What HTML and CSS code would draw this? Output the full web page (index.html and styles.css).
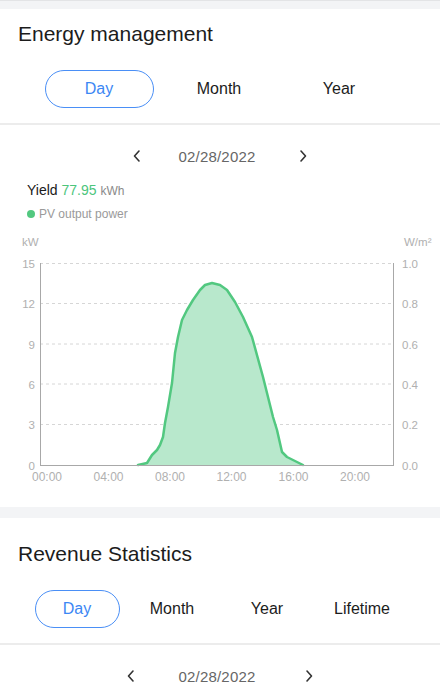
FILE: index.html
```html
<!DOCTYPE html>
<html>
<head>
<meta charset="utf-8">
<link rel="stylesheet" href="styles.css">
</head>
<body>
<div class="page">
  <section class="card">
    <h2 class="card-title">Energy management</h2>
    <div class="tabs tabs-3">
      <div class="tab active">Day</div>
      <div class="tab">Month</div>
      <div class="tab">Year</div>
    </div>
    <div class="divider"></div>
    <div class="date-nav">
      <svg class="chev" width="10" height="14" viewBox="0 0 10 14"><path d="M7 2 L2.5 7 L7 12" fill="none" stroke="#333" stroke-width="1.6" stroke-linecap="round" stroke-linejoin="round"/></svg>
      <span class="date">02/28/2022</span>
      <svg class="chev" width="10" height="14" viewBox="0 0 10 14"><path d="M3 2 L7.5 7 L3 12" fill="none" stroke="#333" stroke-width="1.6" stroke-linecap="round" stroke-linejoin="round"/></svg>
    </div>
    <div class="yield">Yield <span class="yield-val">77.95</span> <span class="yield-unit">kWh</span></div>
    <div class="legend"><span class="dot"></span>PV output power</div>
    <svg class="chart" width="440" height="260" viewBox="0 0 440 260">
      <g font-family="Liberation Sans, Arial, sans-serif" font-size="11.5" fill="#b0b0b0">
        <text x="22" y="14">kW</text>
        <text x="404" y="14">W/m²</text>
        <g text-anchor="end">
          <text x="35" y="35.5">15</text>
          <text x="35" y="76">12</text>
          <text x="35" y="116.5">9</text>
          <text x="35" y="156.5">6</text>
          <text x="35" y="197">3</text>
          <text x="35" y="237.5">0</text>
        </g>
        <g>
          <text x="402" y="35.5">1.0</text>
          <text x="402" y="76">0.8</text>
          <text x="402" y="116.5">0.6</text>
          <text x="402" y="156.5">0.4</text>
          <text x="402" y="197">0.2</text>
          <text x="402" y="237.5">0.0</text>
        </g>
        <g text-anchor="middle" font-size="12">
          <text x="47" y="248.5">00:00</text>
          <text x="108.5" y="248.5">04:00</text>
          <text x="170" y="248.5">08:00</text>
          <text x="231.5" y="248.5">12:00</text>
          <text x="293.5" y="248.5">16:00</text>
          <text x="355" y="248.5">20:00</text>
        </g>
      </g>
      <g stroke="#d6d6d6" stroke-width="1" stroke-dasharray="3 3">
        <line x1="40" y1="31.5" x2="394" y2="31.5"/>
        <line x1="40" y1="71.5" x2="394" y2="71.5"/>
        <line x1="40" y1="112" x2="394" y2="112"/>
        <line x1="40" y1="152" x2="394" y2="152"/>
        <line x1="40" y1="192.5" x2="394" y2="192.5"/>
      </g>
      <path d="M138 233 L147 231 L152 223 L157 218 L160 213 L163 205 L165 191 L168 175 L172 151 L175 121 L178 105 L182 88 L187 78 L193 68 L200 58 L205 53 L212 51 L220 53 L227 58 L235 70 L243 85 L252 105 L263 145 L273 185 L277 198 L282 220 L287 225 L303 233 Z" fill="#b8e8cc"/>
      <polyline points="138,233 147,231 152,223 157,218 160,213 163,205 165,191 168,175 172,151 175,121 178,105 182,88 187,78 193,68 200,58 205,53 212,51 220,53 227,58 235,70 243,85 252,105 263,145 273,185 277,198 282,220 287,225 303,233" fill="none" stroke="#52c880" stroke-width="2.5" stroke-linejoin="round" stroke-linecap="round"/>
      <g stroke="#a8a8a8" stroke-width="1">
        <line x1="40.5" y1="31" x2="40.5" y2="233.5"/>
        <line x1="393.5" y1="31" x2="393.5" y2="233.5"/>
        <line x1="40" y1="233.5" x2="394" y2="233.5"/>
      </g>
    </svg>
  </section>
  <section class="card card-2">
    <h2 class="card-title">Revenue Statistics</h2>
    <div class="tabs tabs-4">
      <div class="tab active">Day</div>
      <div class="tab">Month</div>
      <div class="tab">Year</div>
      <div class="tab">Lifetime</div>
    </div>
    <div class="divider"></div>
    <div class="date-nav date-nav-2">
      <svg class="chev" width="10" height="14" viewBox="0 0 10 14"><path d="M7 2 L2.5 7 L7 12" fill="none" stroke="#333" stroke-width="1.6" stroke-linecap="round" stroke-linejoin="round"/></svg>
      <span class="date">02/28/2022</span>
      <svg class="chev" width="10" height="14" viewBox="0 0 10 14"><path d="M3 2 L7.5 7 L3 12" fill="none" stroke="#333" stroke-width="1.6" stroke-linecap="round" stroke-linejoin="round"/></svg>
    </div>
  </section>
</div>
</body>
</html>
```
FILE: styles.css
```css
* { box-sizing: border-box; }
html, body { margin: 0; padding: 0; }
body {
  background: #f3f4f6;
  font-family: "Liberation Sans", Arial, sans-serif;
  color: #1a1a1a;
  width: 440px;
  height: 700px;
  overflow: hidden;
}
.page {
  border-top: 1px solid #e3e4e6;
  padding-top: 8px;
  display: flex;
  flex-direction: column;
  gap: 11px;
}
.card {
  background: #fff;
  padding-bottom: 15px;
}
.card-title {
  margin: 0;
  padding: 11px 0 0 18px;
  font-size: 21px;
  line-height: 28px;
  font-weight: normal;
  color: #1c1c1c;
}
.card-2 .card-title { padding-top: 22px; }
.tabs {
  display: grid;
  margin-top: 22px;
  height: 38px;
  align-items: center;
}
.tabs-3 {
  grid-template-columns: repeat(3, 120px);
  padding-left: 39px;
}
.tabs-4 {
  grid-template-columns: repeat(4, 95px);
  padding-left: 29.5px;
}
.tab {
  justify-self: center;
  font-size: 16px;
  line-height: 38px;
  color: #1c1c1c;
  text-align: center;
}
.tab.active {
  color: #3c87f4;
  border: 1px solid #4a8ff6;
  border-radius: 19px;
  height: 38px;
  line-height: 36px;
}
.tabs-3 .tab.active { width: 109px; }
.tabs-4 .tab.active { width: 85px; }
.divider {
  margin-top: 15px;
  height: 2px;
  background: #ececec;
}
.date-nav {
  display: flex;
  align-items: center;
  justify-content: center;
  height: 30px;
  margin-top: 16px;
}
.date-nav .chev:first-child { margin-right: 36px; }
.date-nav .chev:last-child { margin-left: 42px; }
.date-nav-2 .chev:first-child { margin-right: 42px; }
.date-nav-2 .chev:last-child { margin-left: 48px; }
.date {
  font-size: 15px;
  color: #666;
  letter-spacing: 0.2px;
}
.yield {
  margin-top: 10px;
  padding-left: 27px;
  font-size: 14px;
  line-height: 18px;
  color: #1a1a1a;
}
.yield-val { color: #4cc57c; }
.yield-unit { font-size: 12px; color: #8a8a8a; }
.legend {
  margin-top: 6px;
  padding-left: 27px;
  font-size: 12px;
  line-height: 16px;
  color: #9a9a9a;
  display: flex;
  align-items: center;
}
.dot {
  width: 8px;
  height: 8px;
  border-radius: 50%;
  background: #52c880;
  margin-right: 4px;
}
.chart {
  display: block;
  margin-top: 10px;
}
.card-2 {
  flex: 1;
  padding-bottom: 40px;
}
```
